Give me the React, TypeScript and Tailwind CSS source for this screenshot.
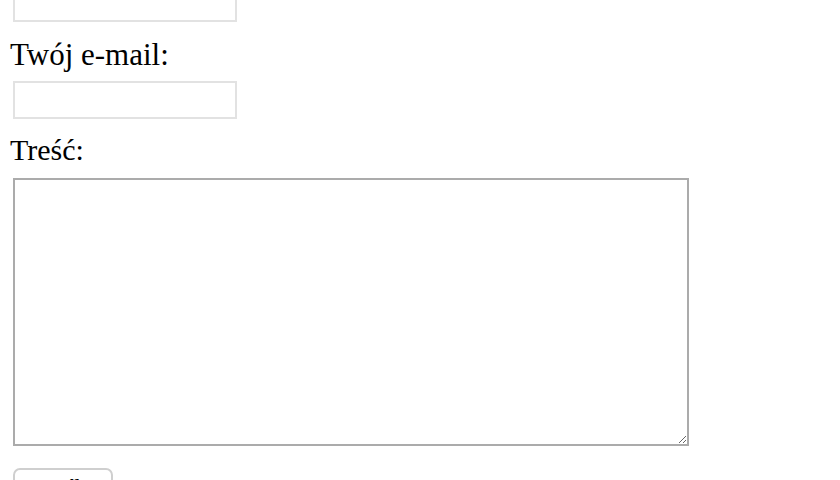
const App = () => {
  return (
    <div className="w-[840px] h-[480px] overflow-hidden bg-white font-['Liberation_Serif',serif] text-black">
      <form className="flex flex-col items-start" onSubmit={(e) => e.preventDefault()}>
        <input
          type="text"
          className="ml-[13px] mt-[-16px] w-[224px] h-[38px] border-2 border-[#e2e2e2] outline-none"
        />
        <label className="pl-[10px] mt-[15px] text-[31px] leading-[36px]">
          Twój e-mail:
        </label>
        <input
          type="email"
          className="ml-[13px] mt-[8px] w-[224px] h-[38px] border-2 border-[#e2e2e2] outline-none"
        />
        <label className="pl-[10px] mt-[13px] text-[30px] leading-[36px]">
          Treść:
        </label>
        <textarea className="ml-[13px] mt-[10px] w-[676px] h-[268px] border-2 border-[#ababab] outline-none resize" />
        <button
          type="submit"
          className="ml-[13px] mt-[22px] w-[100px] h-[38px] rounded-[7px] border-2 border-[#cfcfcf] bg-white flex items-start justify-center pt-[2px] text-[24px] leading-[30px]"
        >
          Wyślij
        </button>
      </form>
    </div>
  );
};

export default App;
